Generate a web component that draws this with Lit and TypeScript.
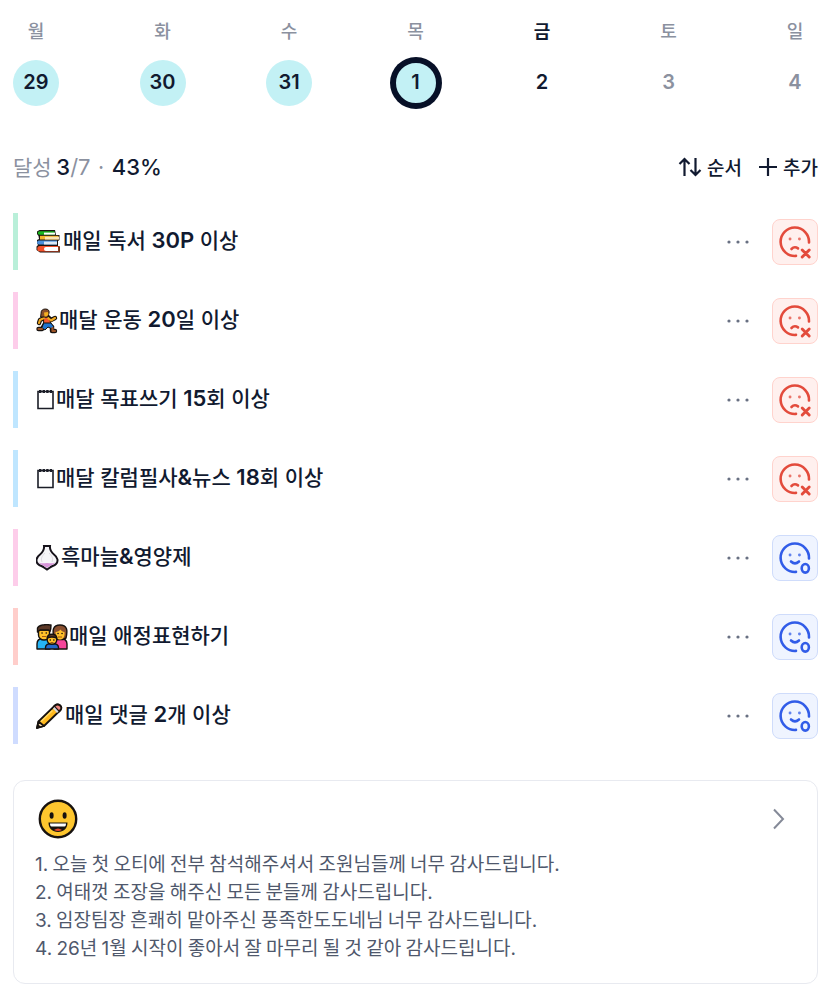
import { LitElement, html, svg, css, TemplateResult } from "lit";
import { customElement, property } from "lit/decorators.js";
import { classMap } from "lit/directives/class-map.js";

type Day = { name: string; date: number; done?: boolean; selected?: boolean; today?: boolean; future?: boolean };
type Art = "books" | "runner" | "note" | "garlic" | "family" | "pencil";
type Habit = { art: Art; title: string; tone: string; done: boolean };

const DAYS: Day[] = [
  { name: "월", date: 29, done: true },
  { name: "화", date: 30, done: true },
  { name: "수", date: 31, done: true },
  { name: "목", date: 1, done: true, selected: true },
  { name: "금", date: 2, today: true },
  { name: "토", date: 3, future: true },
  { name: "일", date: 4, future: true },
];

const HABITS: Habit[] = [
  { art: "books", title: "매일 독서 30P 이상", tone: "mint", done: false },
  { art: "runner", title: "매달 운동 20일 이상", tone: "pink", done: false },
  { art: "note", title: "매달 목표쓰기 15회 이상", tone: "sky", done: false },
  { art: "note", title: "매달 칼럼필사&뉴스 18회 이상", tone: "sky", done: false },
  { art: "garlic", title: "흑마늘&영양제", tone: "pink", done: true },
  { art: "family", title: "매일 애정표현하기", tone: "coral", done: true },
  { art: "pencil", title: "매일 댓글 2개 이상", tone: "blue", done: true },
];

const NOTES = [
  "1. 오늘 첫 오티에 전부 참석해주셔서 조원님들께 너무 감사드립니다.",
  "2. 여태껏 조장을 해주신 모든 분들께 감사드립니다.",
  "3. 임장팀장 흔쾌히 맡아주신 풍족한도도네님 너무 감사드립니다.",
  "4. 26년 1월 시작이 좋아서 잘 마무리 될 것 같아 감사드립니다.",
];

/* Hangul keeps the base family; digits and Latin runs get their own. */
const mixed = (text: string) =>
  text.split(/([0-9A-Za-z&%.]+)/).map((part, i) => (i % 2 ? html`<span class="latin">${part}</span>` : part));

const ART: Record<Art, { width: number; body: TemplateResult }> = {
  books: {
    width: 27,
    body: svg`<path d="M3.500 1H19l1 5h3.500v5L22 12v5l2 1v5.500H4L.500 21v-3.500L2 16l-1-2v-3l2-1-.500-3L1 5V2.500z" fill="#1c1512"/>
      <path d="M3.500 2.200h15v3.600h-15a1.800 1.800 0 0 1 0-3.600z" fill="#19b51e"/>
      <path d="M8 3.600h11v2H8z" fill="#fff"/>
      <path d="M4 6.800h18.500v3.700H4z" fill="#f4b52c"/>
      <path d="M9 7.800h14v2.700H9z" fill="#fbe5b5"/>
      <path d="M3 11.500h18v4H3a2 2 0 0 1 0-4z" fill="#4a8fdb"/>
      <path d="M8 12.600h13v2.900H8z" fill="#dce9f5"/>
      <path d="M4 17h18.500v5.500H4a2.750 2.750 0 0 1 0-5.500z" fill="#f4512a"/>
      <path d="M10 18h12v4H10a2 2 0 0 1 0-4z" fill="#fff"/>
      <path d="M23 17v6" stroke="#8c4320" stroke-width="1.500"/>`,
  },
  runner: {
    width: 23,
    body: svg`<g stroke-linecap="round" stroke-linejoin="round" fill="none">
      <path d="M8 10l-4 2-1 3M12 9l3 3 4-2M9 16l-3 5H2.500M12 16l4 3 0 4h3" stroke="#17120f" stroke-width="4.400"/>
      <path d="M8 9h5l2 7H8z" fill="#f4592f" stroke="#17120f"/>
      <path d="M8 15h7l3 4-2 2-4-2-3 3-3-2z" fill="#1e75cf" stroke="#17120f"/>
      <path d="M8 10l-4 2-1 3M12 10l3 2.500 4-2.500" stroke="#f0a81f" stroke-width="2.200"/>
      <path d="M6 21H2.500M16.500 20v3h2.500" stroke="#9c5327" stroke-width="2.200"/>
      <path d="M5 5C5 2 7 1 9.500 1c3 0 4 2 3.500 4l-1 4H5z" fill="#8a4f2b" stroke="#17120f"/>
      <path d="M8 4.500l4-.500.500 2.500-2 2H8.500z" fill="#f5b022"/></g>`,
  },
  note: {
    width: 20,
    body: svg`<path d="M2 4.500h15v17H2z" fill="#fff" stroke="#1b1d27" stroke-width="1.600"/>
      <path d="M3 4.500h13" stroke="#1b1d27" stroke-width="3" stroke-dasharray="2.400 1.200"/>`,
  },
  garlic: {
    width: 25,
    body: svg`<path d="M8 1h6c-.500 4 1 6 4 8.500 4 3 4.500 7 2 9.500-2 2-4.500 2-6 3.500l-3 2-3-2C6.500 21 4 21 2 19c-2.500-2.500-2-6.500 2-9.500C7 7 8.500 5 8 1z" fill="#f6f5f8" stroke="#17131b" stroke-width="2"/>
      <path d="M3 17.500c3 1.500 5 .500 8 .500s5 1 8-.500c-1 2.500-4.500 2.500-8 5.500-3.500-3-7-3-8-5.500z" fill="#d794d9"/>
      <path d="M9 8c-4 4-4 6-3 9M13 8c4 4 4 6 3 9" stroke="#dedbe2" fill="none"/>`,
  },
  family: {
    width: 33,
    body: svg`<g stroke="#17120f" stroke-width="1.400" stroke-linejoin="round">
      <path d="M1 25v-5c0-4 2-5.500 6-5.500s7 1.500 7 5.500v5z" fill="#25b4f5"/>
      <path d="M18 25v-5c0-4 2-5.500 6-5.500s7 1.500 7 5.500v5z" fill="#f5459a"/>
      <path d="M2.500 6h11v5c0 3-2.500 5-5.500 5s-5.500-2-5.500-5z" fill="#ffc02a"/>
      <path d="M1.500 8V4C3 1 9 0 15 1c0 3 0 4-1 6.500L12.500 6H4z" fill="#5c3927"/>
      <path d="M18 14c-2-8-1-13 6-13s8 5 6 13l-3 1.500h-6z" fill="#8a5030"/>
      <path d="M19.500 8c2 0 4-1 5-2.500 1 1.500 2 2.500 4 2.500.500 5-1.500 7.500-4.500 7.500S19.500 13 19.500 8z" fill="#ffc02a" stroke="none"/>
      <path d="M9.500 25v-1.500c0-3 3-4 6.500-4s6.500 1 6.500 4V25z" fill="#2267c9"/>
      <circle cx="16" cy="15.500" r="4.800" fill="#ffc02a"/>
      <path d="M11.200 14c.500-5 9-5 9.600 0-4-1.500-6-1.500-9.600 0z" fill="#5c3927"/></g>
      <path d="M6 9h.100M10.200 9h.100M22 9.500h.100M26 9.500h.100M14.200 16h.100M17.800 16h.100" stroke="#17120f" stroke-width="1.500" stroke-linecap="round"/>
      <path d="M6 12.500h4.500M22 13h4M14.500 18.500h3" stroke="#a15a12"/>`,
  },
  pencil: {
    width: 29,
    body: svg`<g stroke="#17120f" stroke-width="1.800" stroke-linejoin="round">
      <path d="M1 25l1.500-6.500L19 2.500c3-3 8 1 5.500 4.500L8 23z" fill="#ffb91e"/>
      <path d="M18 3.500l1.500-1.300c3-2 7.500 1.300 5 4.800L23 8.500z" fill="#f0857c"/>
      <path d="M1 25l1.500-6.500L8 23z" fill="#f6d9a8"/></g>
      <path d="M17 5.500l1.500-1.500 4 4.500-1.500 1.500z" fill="#d8dade"/>
      <path d="M1 25.500L2 21l3 3z" fill="#17120f"/>
      <path d="M5 18.500L16.500 7.500" stroke="#ffda66" stroke-width="1.500"/>`,
  },
};

@customElement("week-strip")
class WeekStrip extends LitElement {
  static styles = css`
    :host { display: block; }
    .week { display: flex; justify-content: space-between; }
    .day {
      display: flex; flex-direction: column; align-items: center; gap: 16px;
      width: 46px; padding: 0; border: 0; background: none; cursor: pointer;
      color: #111a30; font: 500 18px/28px "Noto Sans CJK KR", sans-serif;
    }
    .name { color: #8b919f; }
    .date {
      box-sizing: border-box; width: 46px; height: 46px; border-radius: 50%;
      font: 600 20px/44px Inter, sans-serif; text-align: center;
    }
    .done .date { background: #c3f1f5; }
    .selected .date { line-height: 38px; border: 3px solid #071027; box-shadow: 0 0 0 3px #071027; }
    .today .name { color: #111a30; font-weight: 700; }
    .future .date { color: #8b919f; }
  `;
  render() {
    return html`<nav class="week" aria-label="주간 날짜">
      ${DAYS.map(
        (d) => html`<button
          class=${classMap({ day: true, done: !!d.done, selected: !!d.selected, today: !!d.today, future: !!d.future })}
          aria-pressed=${d.selected ? "true" : "false"}
        ><span class="name">${d.name}</span><span class="date">${d.date}</span></button>`
      )}
    </nav>`;
  }
}

@customElement("habit-row")
class HabitRow extends LitElement {
  @property({ attribute: false }) habit!: Habit;
  static styles = css`
    :host { display: block; }
    .row { display: flex; align-items: center; height: 57px; border-left: 5px solid; padding-left: 18px; }
    .mint { border-color: #b9efd9; }
    .pink { border-color: #fdcdea; }
    .sky { border-color: #bfe6ff; }
    .coral { border-color: #ffcecb; }
    .blue { border-color: #cfdcff; }
    .art { flex: none; height: 26px; }
    .title { flex: 1; margin: 0; padding-bottom: 2px; color: #111a30; font: 500 21px/32px Inter, "Noto Sans CJK KR", sans-serif; }
    .latin { font-size: 22px; font-weight: 600; line-height: 1; }
    button { padding: 0; cursor: pointer; display: grid; place-items: center; }
    .more { width: 32px; height: 32px; margin-right: 18px; border: 0; background: none; }
    .state { box-sizing: border-box; width: 46px; height: 46px; border-radius: 8px; color: #e34b3c; background: #fff0ee; border: 1px solid #ffd3cd; }
    .state.ok { color: #315ce8; background: #eff4ff; border-color: #cfdcfb; }
  `;
  render() {
    const { art, title, tone, done } = this.habit;
    const { width, body } = ART[art];
    return html`<div class="row ${tone}">
      <svg class="art" width=${width} height="26" viewBox="0 0 ${width} 26" aria-hidden="true">${body}</svg>
      <h2 class="title">${mixed(title)}</h2>
      <button class="more" aria-label="더보기">
        <svg width="24" height="6" fill="#687082"><circle cx="3" cy="3" r="1.600"/><circle cx="12" cy="3" r="1.600"/><circle cx="21" cy="3" r="1.600"/></svg>
      </button>
      <button class="state ${done ? "ok" : ""}" aria-label=${done ? "완료" : "미완료"}>
        <svg width="44" height="44" viewBox="1 1 44 44" fill="none" stroke="currentColor" stroke-width="2.600" stroke-linecap="round">
          <path d="M24 36.900A14.200 14.200 0 1 1 37 23.500"/>
          <path d="M18 20h.100M27.400 20h.100" stroke-width="2.800" opacity=".75"/>
          ${done
            ? svg`<path d="M19 26.500q4 3.600 8 0"/><ellipse cx="33.300" cy="33.300" rx="3.600" ry="4.300"/>`
            : svg`<path d="M19.500 30q3-3.200 6.500-.600"/><path d="M30.200 31l7 7m0-7l-7 7" stroke-width="2.900"/>`}
        </svg>
      </button>
    </div>`;
  }
}

@customElement("gratitude-card")
class GratitudeCard extends LitElement {
  static styles = css`
    :host { display: block; }
    .card { border: 1px solid #e8eaf0; border-radius: 12px; padding: 16px 24px 22px 21px; }
    .head { display: flex; justify-content: space-between; align-items: center; height: 44px; margin-bottom: 8px; }
    .open { display: grid; place-items: center; width: 28px; height: 28px; padding: 0; border: 0; background: none; cursor: pointer; }
    .lines { margin: 0; padding: 0; list-style: none; color: #4f586c; font: 400 19px/28px "Noto Sans CJK KR", sans-serif; }
    .latin { font-family: Inter, sans-serif; line-height: 1; }
  `;
  render() {
    return html`<section class="card" aria-label="감사일기">
      <div class="head">
        <svg width="44" height="44" aria-hidden="true">
          <circle cx="23" cy="22" r="18.200" fill="#fec62e" stroke="#17120f" stroke-width="2.400"/>
          <ellipse cx="16.600" cy="18.500" rx="2" ry="3.200" fill="#17120f"/><ellipse cx="29.600" cy="18.500" rx="2" ry="3.200" fill="#17120f"/>
          <path d="M13.500 25.500h19c0 6-4 9.500-9.500 9.500s-9.500-3.500-9.500-9.500z" fill="#17120f"/>
          <path d="M15 26.500h16c0 2-.500 3-1.500 3h-13c-1 0-1.500-1-1.500-3z" fill="#fff"/>
          <path d="M19 33q4-3 8 0-4 2-8 0z" fill="#e5472d"/>
        </svg>
        <button class="open" aria-label="열기">
          <svg width="14" height="22" fill="none" stroke="#858a98" stroke-width="2"><path d="M2 1.500l9 9.500-9 9.500"/></svg>
        </button>
      </div>
      <ol class="lines">${NOTES.map((n) => html`<li>${mixed(n)}</li>`)}</ol>
    </section>`;
  }
}

@customElement("app-root")
class AppRoot extends LitElement {
  static styles = css`
    :host { display: block; background: #fff; color: #111a30; font-family: "Noto Sans CJK KR", sans-serif; }
    .page { padding: 16px 9px 7px 13px; }
    .bar { display: flex; justify-content: space-between; align-items: center; height: 32px; margin-top: 45px; }
    .score { margin: 0; padding-bottom: 2px; font: 400 21px/32px "Noto Sans CJK KR", sans-serif; color: #8b919f; }
    .latin { font: 400 22px/1 Inter, sans-serif; }
    .strong { color: #111a30; font-weight: 500; }
    .actions { display: flex; gap: 16px; }
    .action { display: flex; align-items: center; gap: 5px; padding: 0; border: 0; background: none; cursor: pointer; color: #111a30; font: 500 19px/28px "Noto Sans CJK KR", sans-serif; }
    .habits { display: grid; gap: 22px; margin: 30px 0 36px; padding: 0; list-style: none; }
  `;
  render() {
    return html`<main class="page">
      <week-strip></week-strip>
      <div class="bar">
        <p class="score">달성 <span class="latin"><span class="strong">3</span>/7</span> · <span class="latin strong">43%</span></p>
        <div class="actions">
          <button class="action">
            <svg width="24" height="20" fill="none" stroke="currentColor" stroke-width="2.200"><path d="M6.500 19V2M1.500 7l5-5 5 5M17.500 1v17M12.500 13l5 5 5-5"/></svg>순서
          </button>
          <button class="action">
            <svg width="20" height="20" fill="none" stroke="currentColor" stroke-width="2.200"><path d="M10 1v18M1 10h18"/></svg>추가
          </button>
        </div>
      </div>
      <ul class="habits">${HABITS.map((h) => html`<li><habit-row .habit=${h}></habit-row></li>`)}</ul>
      <gratitude-card></gratitude-card>
    </main>`;
  }
}
